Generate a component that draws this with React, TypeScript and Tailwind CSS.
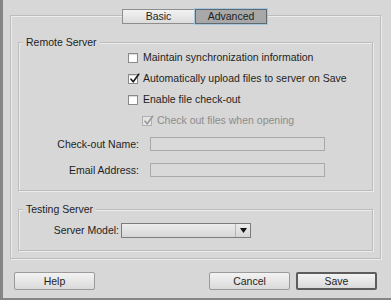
import React from "react";

function CheckBox({ checked = false, disabled = false }: { checked?: boolean; disabled?: boolean }) {
  return (
    <span
      className={`relative flex h-[10px] w-[10px] shrink-0 items-center justify-center border ${
        disabled ? "border-[#b0b0b0] bg-[#e4e4e4]" : "border-[#8a8a8a] bg-white shadow-[inset_0_1px_1px_rgba(0,0,0,0.15)]"
      }`}
    >
      {checked && (
        <svg
          className="absolute -top-[2px] left-[0px] h-[11px] w-[11px]"
          viewBox="0 0 12 12"
          fill="none"
          stroke={disabled ? "#9a9a9a" : "#1a1a1a"}
          strokeWidth={1.8}
          strokeLinecap="round"
          strokeLinejoin="round"
        >
          <path d="M2.2 6.8 L4.6 9.6 L10.6 1.4" />
        </svg>
      )}
    </span>
  );
}

function CheckRow({
  label,
  checked,
  disabled,
  indent,
}: {
  label: string;
  checked?: boolean;
  disabled?: boolean;
  indent: string;
}) {
  return (
    <div className={`flex h-[21px] items-center gap-[5px] ${indent}`}>
      <CheckBox checked={checked} disabled={disabled} />
      <span className={disabled ? "text-[#8c8c8c]" : "text-[#1e1e1e]"}>{label}</span>
    </div>
  );
}

function Button({ label, primary = false }: { label: string; primary?: boolean }) {
  return (
    <button
      className={`flex h-[18px] w-[81px] items-center justify-center rounded-[2px] bg-gradient-to-b from-[#f3f3f3] to-[#dadada] text-[#1e1e1e] ${
        primary ? "border-2 border-[#5c5c5c]" : "border border-[#9a9a9a]"
      }`}
    >
      {label}
    </button>
  );
}

function Group({ title, height, children }: { title: string; height: string; children: React.ReactNode }) {
  return (
    <div className={`relative border border-[#bcbcbc] shadow-[inset_1px_1px_0_#ececec,1px_1px_0_#ececec] ${height}`}>
      <span className="absolute -top-[7px] left-[4px] bg-[#d7d7d7] px-[3px] leading-[13px] text-[#1e1e1e]">
        {title}
      </span>
      {children}
    </div>
  );
}

export default function App() {
  return (
    <div
      className="h-[300px] w-[391px] overflow-hidden border-b-2 border-l-[3px] border-[#858585] bg-[#d7d7d7] pl-[7px] pr-[10px] pt-[15px] text-[10.5px] leading-[13px]"
      style={{ fontFamily: '"Liberation Sans", Arial, sans-serif' }}
    >
      <div className="relative h-[244px] border border-[#bcbcbc] px-[7px] pt-[26px] shadow-[inset_1px_1px_0_#ececec,1px_1px_0_#ececec]">
        <div className="absolute -top-[7px] left-[111px] flex">
          <div className="flex h-[15px] w-[73px] items-center justify-center border border-[#8e8e8e] bg-gradient-to-b from-[#f2f2f2] to-[#dcdcdc] text-[#1e1e1e]">
            Basic
          </div>
          <div className="flex h-[15px] w-[72px] items-center justify-center border border-[#5e6a72] bg-[#a8a8a8] text-[#1e1e1e] shadow-[0_0_0_1px_#a7c6dc]">
            Advanced
          </div>
        </div>

        <Group title="Remote Server" height="h-[149px]">
          <div className="pt-[4px]">
            <CheckRow indent="pl-[109px]" label="Maintain synchronization information" />
            <CheckRow indent="pl-[109px]" label="Automatically upload files to server on Save" checked />
            <CheckRow indent="pl-[109px]" label="Enable file check-out" />
            <CheckRow indent="pl-[123px]" label="Check out files when opening" checked disabled />
          </div>
          <div className="mt-[6px] flex h-[14px] items-center gap-[11px]">
            <span className="w-[120px] text-right text-[#1e1e1e]">Check-out Name:</span>
            <span className="h-[14px] w-[175px] border border-[#a9a9a9] bg-[#d9d9d9]" />
          </div>
          <div className="mt-[12px] flex h-[14px] items-center gap-[11px]">
            <span className="w-[120px] text-right text-[#1e1e1e]">Email Address:</span>
            <span className="h-[14px] w-[175px] border border-[#a9a9a9] bg-[#d9d9d9]" />
          </div>
        </Group>

        <div className="mt-[18px]">
          <Group title="Testing Server" height="h-[42px]">
            <div className="flex items-center gap-[2px] pt-[13px]">
              <span className="w-[100px] text-right text-[#1e1e1e]">Server Model:</span>
              <div className="flex h-[15px] w-[130px] items-center border border-[#7c7c7c] bg-gradient-to-b from-[#ececec] to-[#d6d6d6]">
                <span className="flex-1" />
                <span className="flex h-full w-[15px] items-center justify-center border-l border-[#b5b5b5]">
                  <svg className="h-[5px] w-[7px]" viewBox="0 0 7 5">
                    <path d="M0 0 H7 L3.5 5 Z" fill="#111" />
                  </svg>
                </span>
              </div>
            </div>
          </Group>
        </div>
      </div>

      <div className="mt-[13px] flex items-center pl-[4px] pr-[4px]">
        <Button label="Help" />
        <span className="flex-1" />
        <Button label="Cancel" />
        <span className="w-[6px]" />
        <Button label="Save" primary />
      </div>
    </div>
  );
}
